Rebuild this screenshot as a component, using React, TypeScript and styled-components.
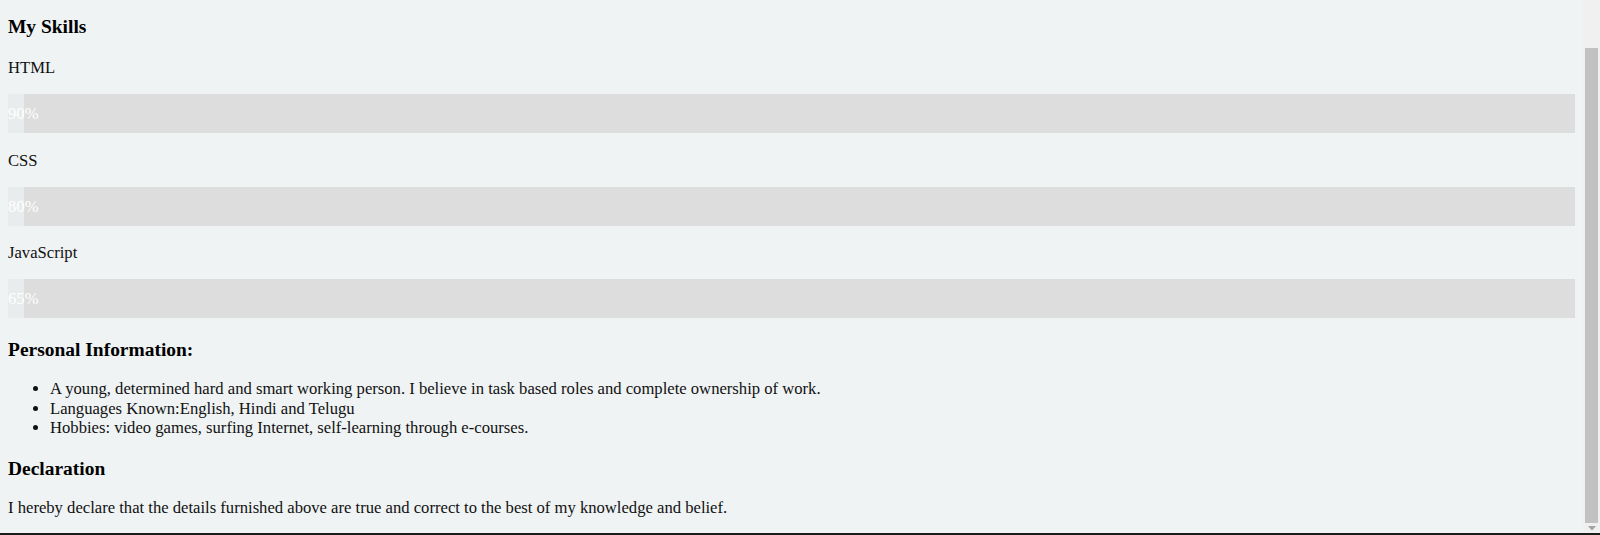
import React from 'react';
import styled, { createGlobalStyle } from 'styled-components';

const Global = createGlobalStyle`
  html, body { margin: 0; padding: 0; background: #eff3f4; }
  body { font-family: "Liberation Serif", "Times New Roman", serif; }
`;

const Frame = styled.div`
  height: 535px;
  display: flex;
  flex-direction: column;
  overflow: hidden;
  background: #eff3f4;
`;

const Viewport = styled.div`
  flex: 1;
  min-height: 0;
  display: flex;
`;

const Content = styled.main`
  flex: 1;
  min-width: 0;
  padding: 15.6px 8px 0;
  color: #111;
  font-size: 16.64px;
  line-height: 18.4px;
`;

const Heading = styled.h3<{ $top?: number }>`
  margin: ${(p) => p.$top ?? 0}px 0 0;
  font-size: 19.47px;
  line-height: 21.5px;
  font-weight: bold;
  color: #000;
`;

const SkillLabel = styled.p<{ $top: number }>`
  margin: ${(p) => p.$top}px 0 0;
`;

const Track = styled.div`
  margin-top: 16.6px;
  width: 100%;
  background: #dddddd;
`;

const Fill = styled.div`
  width: 16px;
  padding: 10px 0;
  line-height: 19px;
  background: #e8ecec;
  color: #ffffff;
  white-space: nowrap;
  overflow: visible;
`;

const InfoList = styled.ul`
  margin: 19px 0 0;
  padding-left: 42px;
  line-height: 19.35px;
  list-style: disc;
`;

const Para = styled.p`
  margin: 19.8px 0 0;
`;

const Scrollbar = styled.div`
  width: 17px;
  background: #f0f0f0;
  display: flex;
  flex-direction: column;
  padding: 48px 2px 0 2px;
  box-sizing: border-box;
`;

const Thumb = styled.div`
  height: 475px;
  background: #c1c1c1;
`;

const ArrowBox = styled.div`
  flex: 1;
  display: flex;
  align-items: center;
  justify-content: center;
`;

const BottomEdge = styled.div`
  height: 2px;
  background: #1b1b1b;
`;

const skills = [
  { name: 'HTML', value: '90%' },
  { name: 'CSS', value: '80%' },
  { name: 'JavaScript', value: '65%' },
];

export default function App() {
  return (
    <>
      <Global />
      <Frame>
        <Viewport>
          <Content>
            <Heading>My Skills</Heading>
            {skills.map((s, i) => (
              <React.Fragment key={s.name}>
                <SkillLabel $top={i === 0 ? 22 : 18.6}>{s.name}</SkillLabel>
                <Track>
                  <Fill>{s.value}</Fill>
                </Track>
              </React.Fragment>
            ))}
            <Heading $top={20.4}>Personal Information:</Heading>
            <InfoList>
              <li>A young, determined hard and smart working person. I believe in task based roles and complete ownership of work.</li>
              <li>Languages Known:English, Hindi and Telugu</li>
              <li>Hobbies: video games, surfing Internet, self-learning through e-courses.</li>
            </InfoList>
            <Heading $top={20.4}>Declaration</Heading>
            <Para>I hereby declare that the details furnished above are true and correct to the best of my knowledge and belief.</Para>
          </Content>
          <Scrollbar>
            <Thumb />
            <ArrowBox>
              <svg width="8" height="5" viewBox="0 0 8 5">
                <path d="M0 0 H8 L4 4.5 Z" fill="#a3a3a3" />
              </svg>
            </ArrowBox>
          </Scrollbar>
        </Viewport>
        <BottomEdge />
      </Frame>
    </>
  );
}
